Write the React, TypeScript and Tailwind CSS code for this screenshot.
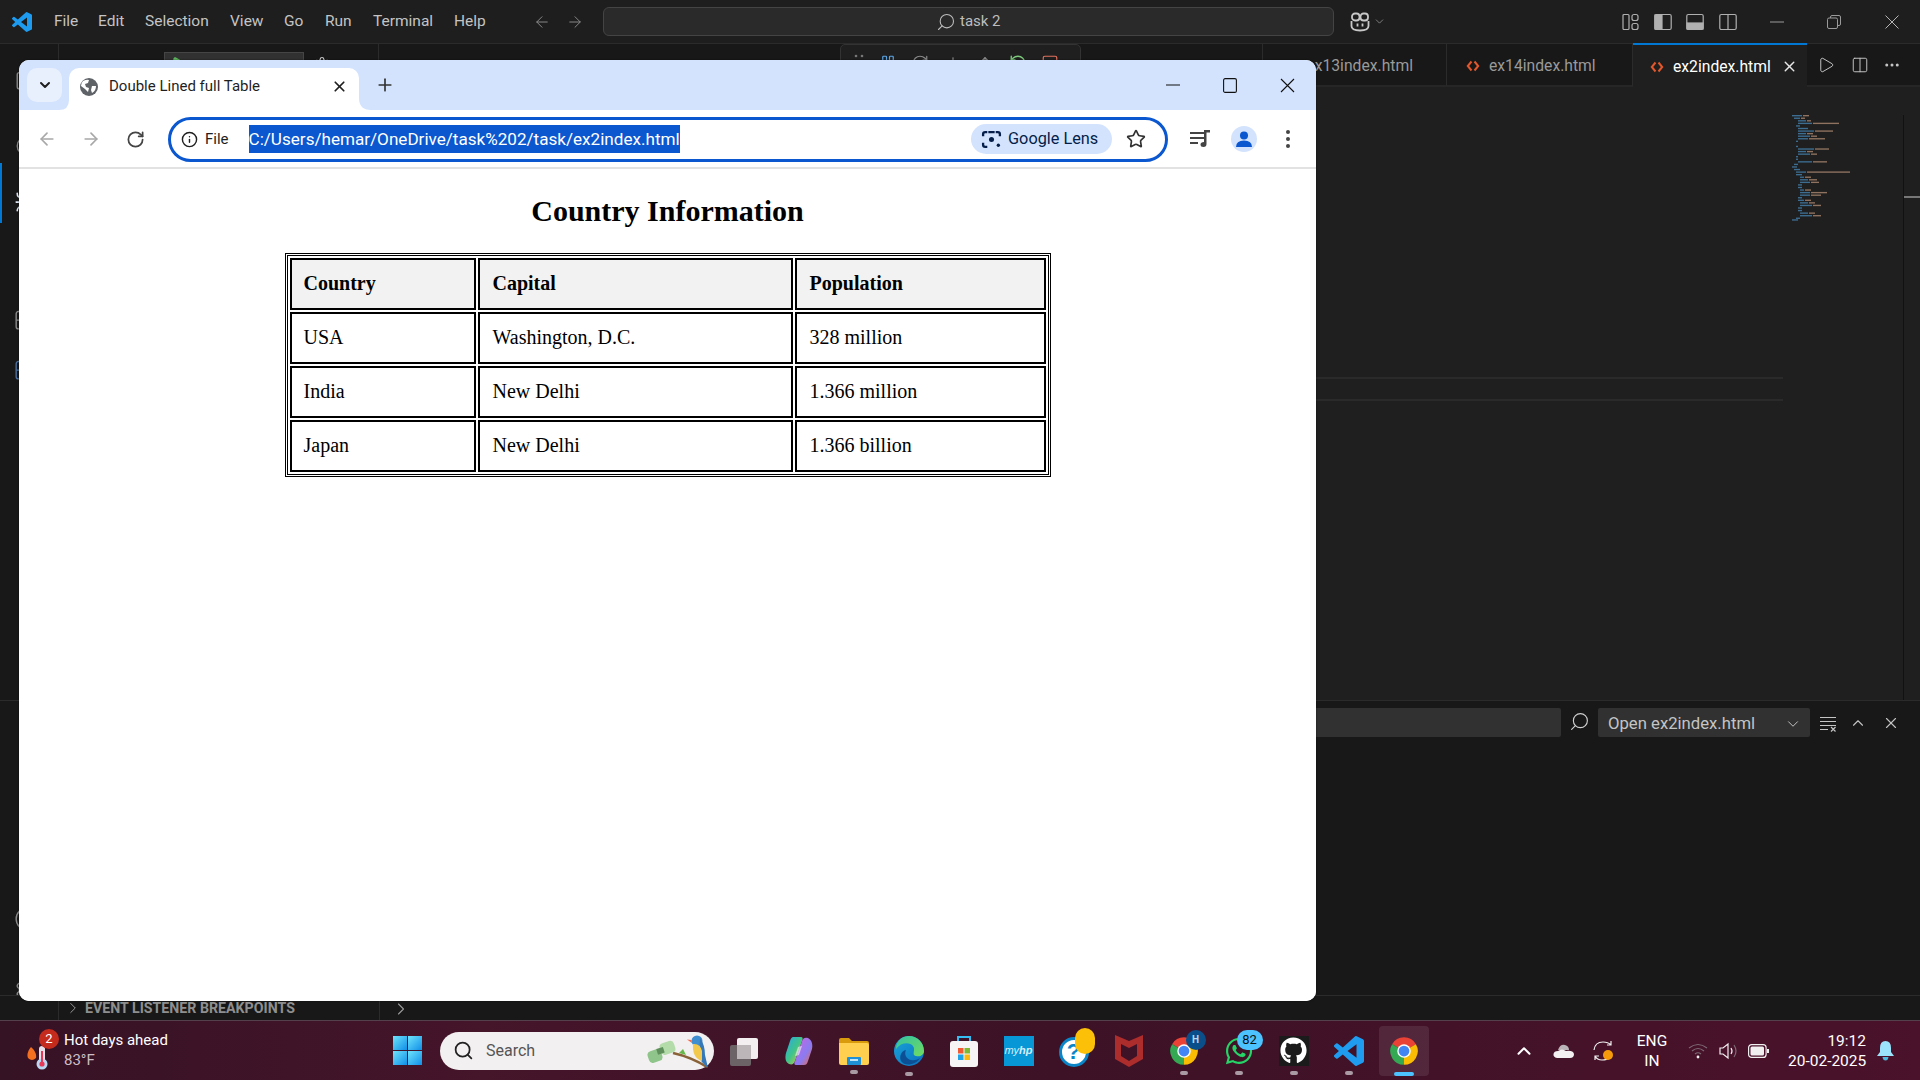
import { ArrowLeft, ArrowRight, RotateCw, Info, Star, X, Plus, ChevronDown, ChevronRight, ChevronUp, Search, Play, Columns2, MoreHorizontal, Files, Bug, Blocks, CircleUserRound, Settings, Pause, RotateCcw, ArrowDown, ArrowUp, Square } from 'lucide-react'
import { FaGithub, FaWhatsapp } from 'react-icons/fa'

const sans = "[font-family:Roboto,'Liberation_Sans',sans-serif]"

function VsCodeLogo({ size = 24, color = '#23a8f2' }: { size?: number; color?: string }) {
  return (
    <svg width={size} height={size} viewBox="0 0 24 24">
      <path fill={color} d="M23.15 2.587L18.21.21a1.494 1.494 0 0 0-1.705.29l-9.46 8.63-4.12-3.128a.999.999 0 0 0-1.276.057L.327 7.261A1 1 0 0 0 .326 8.74L3.899 12 .326 15.26a1 1 0 0 0 .001 1.479L1.65 17.94a.999.999 0 0 0 1.276.057l4.12-3.128 9.46 8.63a1.492 1.492 0 0 0 1.704.29l4.942-2.377A1.5 1.5 0 0 0 24 20.06V3.939a1.5 1.5 0 0 0-.85-1.352zm-5.146 14.861L10.826 12l7.178-5.448v10.896z" />
    </svg>
  )
}

function ChromeLogo({ size = 30 }: { size?: number }) {
  return (
    <svg width={size} height={size} viewBox="0 0 24 24">
      <path fill="#ea4335" d="M12 12 L2.47 6.5 A11 11 0 0 1 21.53 6.5 Z" />
      <path fill="#fbbc04" d="M12 12 L21.53 6.5 A11 11 0 0 1 12 23 Z" />
      <path fill="#34a853" d="M12 12 L12 23 A11 11 0 0 1 2.47 6.5 Z" />
      <circle cx="12" cy="12" r="5.4" fill="#fff" />
      <circle cx="12" cy="12" r="4.3" fill="#4285f4" />
    </svg>
  )
}

function HtmlIcon() {
  return (
    <svg width="14" height="14" viewBox="0 0 14 14" fill="none" stroke="#e2572b" strokeWidth="2">
      <path d="M5.5 2.5 L1.8 7 L5.5 11.5" />
      <path d="M8.5 2.5 L12.2 7 L8.5 11.5" />
    </svg>
  )
}

function Minimap() {
  // rows: y, indent, then blue / orange widths
  const rows = [
    [0, 2, 10, 6], [3, 4, 6, 4], [6, 8, 8, 4], [9, 8, 14, 26], [12, 6, 4, 0], [15, 8, 10, 0], [18, 8, 16, 18],
    [21, 8, 8, 6], [24, 8, 12, 6], [27, 8, 10, 16], [30, 6, 2, 0], [36, 6, 2, 0], [39, 8, 16, 14], [42, 8, 8, 6], [45, 8, 12, 6],
    [48, 6, 2, 0], [51, 6, 2, 0], [54, 8, 14, 14], [57, 4, 4, 0], [60, 2, 5, 0], [63, 4, 6, 0], [66, 6, 10, 46], [69, 6, 6, 0],
    [72, 10, 4, 6], [75, 10, 8, 8], [78, 10, 10, 8], [81, 8, 4, 0], [84, 8, 4, 0], [87, 10, 4, 6], [90, 10, 10, 16], [93, 10, 10, 10],
    [96, 8, 4, 0], [99, 8, 6, 6], [102, 10, 8, 6], [105, 10, 12, 8], [108, 8, 4, 0], [111, 8, 4, 0], [114, 10, 8, 6], [117, 10, 12, 8], [120, 6, 4, 0], [122, 2, 6, 0],
  ]
  return (
    <svg width="60" height="106" viewBox="0 0 60 124" preserveAspectRatio="none">
      {rows.map(([y, x, a, b]) => (
        <g key={y}>
          <rect x={x} y={y} width={a} height="1.6" fill="#3d6d90" />
          {b > 0 && <rect x={x + a + 1} y={y} width={b} height="1.6" fill="#8f7360" />}
        </g>
      ))}
    </svg>
  )
}

function EdgeLogo() {
  return (
    <svg width="32" height="32" viewBox="0 0 32 32">
      <defs>
        <linearGradient id="edgeA" x1="0" y1="0" x2="1" y2="1">
          <stop offset="0" stopColor="#1aa6d8" />
          <stop offset="1" stopColor="#0a6fc0" />
        </linearGradient>
        <linearGradient id="edgeB" x1="0" y1="0" x2="1" y2="1">
          <stop offset="0" stopColor="#35c1a0" />
          <stop offset="1" stopColor="#6fdc62" />
        </linearGradient>
      </defs>
      <circle cx="16" cy="16" r="15" fill="url(#edgeA)" />
      <path fill="url(#edgeB)" d="M14 1.2 C23 0 31 7 31 16 C31 20 27 22 23 21 C18 20 23 15 20 11 C17 7 8 7 3 14 C3 7 8 2 14 1.2 Z" />
      <path fill="#0d4f94" d="M27 23 C23 30 12 32 8 26 C6 22 8 16 13 15 C11 19 13 24 18 25 C21 25.5 24 25 27 23 Z" />
    </svg>
  )
}

function TaskbarIcons() {
  const dot = <span className="absolute bottom-[-9px] left-1/2 -translate-x-1/2 w-[8px] h-[4px] rounded-full bg-[#a99aa3]" />
  return (
    <>
      {/* task view */}
      <div className="w-[55px] flex justify-center">
        <svg width="32" height="32" viewBox="0 0 32 32">
          <rect x="9" y="3" width="21" height="21" rx="2" fill="#f3eef0" />
          <rect x="2" y="10" width="21" height="21" rx="2" fill="#6b6366" />
          <rect x="9" y="10" width="14" height="14" fill="#bdb6b9" />
        </svg>
      </div>
      {/* copilot */}
      <div className="w-[55px] flex justify-center">
        <svg width="30" height="32" viewBox="0 0 30 32">
          <defs>
            <linearGradient id="copA" x1="0" y1="0" x2="1" y2="1">
              <stop offset="0" stopColor="#2aa7e8" />
              <stop offset=".5" stopColor="#3fc48a" />
              <stop offset="1" stopColor="#f2c531" />
            </linearGradient>
            <linearGradient id="copB" x1="0" y1="0" x2="1" y2="1">
              <stop offset="0" stopColor="#d163d8" />
              <stop offset=".6" stopColor="#8a7bf2" />
              <stop offset="1" stopColor="#f3683f" />
            </linearGradient>
          </defs>
          <path fill="url(#copA)" d="M9 2 H17 C19 2 19 4 18 6 L11 26 C10 29 8 30 5 29 C1 27 1 22 2 18 L6 6 C7 3 8 2 9 2 Z" />
          <path fill="url(#copB)" d="M20 30 H12 C10 30 10 28 11 26 L18 6 C19 3 21 2 24 3 C28 5 29 10 28 14 L24 26 C23 29 22 30 20 30 Z" />
          <path fill="#fff" opacity=".55" d="M14 12 L18 11 L15 20 L11 21 Z" />
        </svg>
      </div>
      {/* explorer */}
      <div className="w-[55px] flex justify-center">
        <div className="relative">
          <svg width="30" height="28" viewBox="0 0 30 28">
            <path fill="#d99a0c" d="M0 3 Q0 1 2 1 H10 L13 4 H28 Q30 4 30 6 V10 H0 Z" />
            <path fill="#ffd04f" d="M0 6 H28 Q30 6 30 8 V26 Q30 28 28 28 H2 Q0 28 0 26 Z" />
            <rect x="8" y="20" width="14" height="8" rx="1" fill="#1f8fd6" />
            <rect x="11" y="22" width="8" height="2" fill="#bfe4f8" />
          </svg>
          {dot}
        </div>
      </div>
      {/* edge */}
      <div className="w-[55px] flex justify-center">
        <div className="relative flex">
          <EdgeLogo />
          {dot}
        </div>
      </div>
      {/* store */}
      <div className="w-[55px] flex justify-center">
        <svg width="30" height="32" viewBox="0 0 30 32">
          <path d="M9 7 V2 H21 V7" fill="none" stroke="#35bdf2" strokeWidth="2" />
          <rect x="1" y="6" width="28" height="26" rx="3" fill="#f6f4f4" />
          <rect x="9" y="13" width="5.5" height="5.5" fill="#ef5a34" />
          <rect x="15.5" y="13" width="5.5" height="5.5" fill="#7fb933" />
          <rect x="9" y="19.5" width="5.5" height="5.5" fill="#1fa3e8" />
          <rect x="15.5" y="19.5" width="5.5" height="5.5" fill="#fbb910" />
        </svg>
      </div>
      {/* myhp */}
      <div className="w-[55px] flex justify-center">
        <div className="w-[30px] h-[30px] bg-[#0796d6] flex items-center justify-center text-[#d6eefa] text-[11px] italic [font-family:'Liberation_Sans',sans-serif]">
          my<span className="font-bold">hp</span>
        </div>
      </div>
      {/* help */}
      <div className="w-[55px] flex justify-center">
        <div className="relative w-[30px] h-[30px] mt-[2px] rounded-full bg-white border-[3px] border-[#0a86c8] flex items-center justify-center text-[#0a86c8] text-[22px] font-bold [font-family:'Liberation_Sans',sans-serif]">
          ?
          <span className="absolute -top-[12px] -right-[9px] w-[20px] h-[26px] rounded-full bg-[#fdc009]" />
        </div>
      </div>
      {/* mcafee */}
      <div className="w-[55px] flex justify-center">
        <svg width="28" height="32" viewBox="0 0 28 32">
          <path fill="#ad2c2c" d="M0 0 L14 6 L28 0 V24 L14 32 L0 24 Z M6 9 V21 L14 26 L22 21 V9 L14 13 Z" fillRule="evenodd" />
        </svg>
      </div>
      {/* chrome with profile badge */}
      <div className="w-[55px] flex justify-center">
        <div className="relative flex">
          <ChromeLogo />
          <span className="absolute -top-[6px] -right-[7px] w-[20px] h-[20px] rounded-full bg-[#0b4f8a] text-[#bcd8f0] text-[10px] font-bold flex items-center justify-center">H</span>
          {dot}
        </div>
      </div>
      {/* whatsapp */}
      <div className="w-[55px] flex justify-center">
        <div className="relative flex">
          <FaWhatsapp size={30} color="#25d366" />
          <span className="absolute -top-[6px] -right-[9px] w-[26px] h-[20px] rounded-full bg-[#4cc2ff] text-[#111] text-[13px] flex items-center justify-center">82</span>
          {dot}
        </div>
      </div>
      {/* github */}
      <div className="w-[55px] flex justify-center">
        <div className="relative w-[30px] h-[30px] bg-[#1b1b1b] flex items-center justify-center">
          <FaGithub size={27} color="#fff" />
          {dot}
        </div>
      </div>
      {/* vscode */}
      <div className="w-[55px] flex justify-center">
        <div className="relative flex">
          <VsCodeLogo size={30} color="#1f9cf0" />
          {dot}
        </div>
      </div>
      {/* chrome active */}
      <div className="w-[55px] flex justify-center">
        <div className="relative flex w-[50px] h-[50px] items-center justify-center rounded-[4px] bg-[#5a3044]/70">
          <ChromeLogo />
          <span className="absolute bottom-[0px] left-1/2 -translate-x-1/2 w-[20px] h-[4px] rounded-full bg-[#4cc2ff]" />
        </div>
      </div>
    </>
  )
}

function Browser() {
  const rows = [
    ['USA', 'Washington, D.C.', '328 million'],
    ['India', 'New Delhi', '1.366 million'],
    ['Japan', 'New Delhi', '1.366 billion'],
  ]
  return (
    <div className={`absolute left-[19px] top-[60px] w-[1297px] h-[941px] rounded-[10px] overflow-hidden bg-white flex flex-col shadow-[0_0_2px_rgba(0,0,0,0.6)] ${sans}`}>
      {/* title strip */}
      <div className="h-[50px] bg-[#d3e3fd] flex items-start shrink-0">
        <div className="ml-[8px] mt-[8px] w-[35px] h-[34px] rounded-[10px] bg-[#e9f0fd] flex items-center justify-center">
          <ChevronDown size={16} strokeWidth={3} color="#1f1f1f" />
        </div>
        <div className="relative ml-[7px] mt-[8px] w-[290px] h-[42px] bg-white rounded-t-[10px] flex items-center pl-[10px] pb-[5px] z-10">
          <svg className="absolute -left-[10px] bottom-0" width="10" height="10" viewBox="0 0 10 10"><path fill="#fff" d="M10 0 V10 H0 Q10 10 10 0 Z" /></svg>
          <svg className="absolute -right-[12px] bottom-0" width="12" height="12" viewBox="0 0 12 12"><path fill="#fff" d="M0 0 V12 H12 Q0 12 0 0 Z" /></svg>
          <svg width="20" height="20" viewBox="0 0 20 20">
            <circle cx="10" cy="10" r="9" fill="#5f6368" />
            <path fill="#fff" d="M4 4 Q8 2 10 3 L9 6 L6 7 L7 10 L10 11 L9 15 L6 12 L2 9 Q2 6 4 4 Z M13 9 L17 9 Q17 14 13 16 L12 13 Z" />
          </svg>
          <span className="ml-[10px] text-[15px] text-[#1f1f1f] w-[222px]">Double Lined full Table</span>
          <X size={17} strokeWidth={2.4} color="#1f1f1f" />
        </div>
        <div className="ml-[12px] mt-[11px] w-[28px] h-[28px] flex items-center justify-center">
          <Plus size={20} strokeWidth={2} color="#333" />
        </div>
        <div className="ml-auto h-[50px] flex items-center">
          <svg width="14" height="14" viewBox="0 0 14 14"><path d="M0 7 H14" stroke="#111" strokeWidth="1.2" /></svg>
          <svg className="ml-[43px]" width="14" height="15" viewBox="0 0 14 15" fill="none"><rect x=".6" y=".6" width="12.8" height="13.8" rx="1.5" stroke="#111" strokeWidth="1.1" /></svg>
          <svg className="ml-[43px] mr-[21px]" width="15" height="15" viewBox="0 0 15 15"><path d="M1 1 L14 14 M14 1 L1 14" stroke="#111" strokeWidth="1.1" /></svg>
        </div>
      </div>
      {/* toolbar */}
      <div className="h-[59px] shrink-0 bg-white rounded-t-[10px] border-b-2 border-[#e2e2e2] flex items-center pt-[1px]">
        <ArrowLeft className="ml-[18px]" size={20} color="#a8a8a8" strokeWidth={2} />
        <ArrowRight className="ml-[24px]" size={20} color="#a8a8a8" strokeWidth={2} />
        <RotateCw className="ml-[25px]" size={19} color="#444" strokeWidth={2.2} />
        <div className="ml-[23px] w-[1000px] h-[45px] rounded-full border-[3px] border-[#0b57d0] flex items-center pl-[10px]">
          <Info size={17} color="#1f1f1f" strokeWidth={2} />
          <span className="ml-[7px] text-[15px] text-[#1f1f1f]">File</span>
          <span className="ml-[20px] h-[28px] leading-[28px] bg-[#0b57d0] text-white text-[17.1px] whitespace-nowrap">C:/Users/hemar/OneDrive/task%202/task/ex2index.html</span>
          <div className="ml-auto w-[141px] h-[30px] rounded-full bg-[#d3e3fd] flex items-center pl-[10px] text-[#041e49]">
            <svg width="21" height="21" viewBox="0 0 20 20" fill="none" stroke="#041e49" strokeWidth="2.2">
              <path d="M6 3 H4 Q2 3 2 5 V7 M14 3 H16 Q18 3 18 5 V7 M2 13 V15 Q2 17 4 17 H6" />
              <path d="M7 3 H13" />
              <circle cx="10" cy="10" r="2.4" fill="#041e49" stroke="none" />
              <circle cx="16.5" cy="15.5" r="1.6" fill="#041e49" stroke="none" />
            </svg>
            <span className="ml-[6px] text-[16.3px] whitespace-nowrap">Google Lens</span>
          </div>
          <Star className="ml-[14px] mr-[19px]" size={20} color="#333" strokeWidth={2} />
        </div>
        <svg className="ml-[22px]" width="20" height="18" viewBox="0 0 20 18" fill="#444">
          <rect x="0" y="2" width="14" height="2" />
          <rect x="0" y="7" width="14" height="2" />
          <rect x="0" y="12" width="8" height="2" />
          <path d="M14 0 H20 V2.5 H16.5 V14 Q16.5 17 13.5 17 Q10.5 17 10.5 14.5 Q10.5 12 14 12 Z" />
        </svg>
        <div className="ml-[21px] w-[26px] h-[26px] rounded-full bg-[#d3e3fd] flex items-center justify-center">
          <svg width="18" height="18" viewBox="0 0 18 18"><circle cx="9" cy="5.5" r="4" fill="#0b57d0" /><path fill="#0b57d0" d="M1 17 Q1 10.5 9 10.5 Q17 10.5 17 17 Z" /></svg>
        </div>
        <svg className="ml-[29px]" width="4" height="18" viewBox="0 0 4 18" fill="#444"><circle cx="2" cy="2" r="2" /><circle cx="2" cy="9" r="2" /><circle cx="2" cy="16" r="2" /></svg>
      </div>
      {/* page */}
      <div className="flex-1 bg-white text-black [font-family:'Liberation_Serif','Times_New_Roman',serif]">
        <h2 className="mt-[24px] text-center text-[30px] leading-[36px] font-bold">Country Information</h2>
        <table className="mt-[24px] mx-auto w-[766px] table-fixed border-separate border-spacing-[2.5px] border-[3px] border-double border-black text-[20px]">
          <thead>
            <tr className="h-[52px]">
              <th className="w-[186px] border-2 border-black bg-[#f2f2f2] pl-[12px] pb-[2px] text-left font-bold">Country</th>
              <th className="w-[315px] border-2 border-black bg-[#f2f2f2] pl-[13px] pb-[2px] text-left font-bold">Capital</th>
              <th className="border-2 border-black bg-[#f2f2f2] pl-[13px] pb-[2px] text-left font-bold">Population</th>
            </tr>
          </thead>
          <tbody>
            {rows.map(r => (
              <tr key={r[0]} className="h-[52px]">
                <td className="border-2 border-black pl-[12px] pb-[2px]">{r[0]}</td>
                <td className="border-2 border-black pl-[13px] pb-[2px]">{r[1]}</td>
                <td className="border-2 border-black pl-[13px] pb-[2px]">{r[2]}</td>
              </tr>
            ))}
          </tbody>
        </table>
      </div>
    </div>
  )
}

export default function App() {
  return (
    <div className={`relative w-[1920px] h-[1080px] overflow-hidden flex flex-col bg-[#1f1f1f] ${sans}`}>
      {/* vs code title bar */}
      <div className="h-[43px] shrink-0 bg-[#1e1e1e] flex items-center text-[#cccccc] text-[15.5px] relative">
        <div className="ml-[12px]"><VsCodeLogo size={20} color="#1d9bf0" /></div>
        <div className="ml-[22px] flex items-center text-[#c4c4c4]">
          <span className="w-[44px]">File</span>
          <span className="w-[47px]">Edit</span>
          <span className="w-[85px]">Selection</span>
          <span className="w-[54px]">View</span>
          <span className="w-[41px]">Go</span>
          <span className="w-[48px]">Run</span>
          <span className="w-[81px]">Terminal</span>
          <span>Help</span>
        </div>
        <ArrowLeft className="ml-[47px]" size={18} color="#8a8a8a" strokeWidth={1.3} />
        <ArrowRight className="ml-[15px]" size={18} color="#8a8a8a" strokeWidth={1.3} />
        <div className="ml-[19px] w-[731px] h-[29px] rounded-[6px] border border-[#444] bg-[#2a2a2a] flex items-center justify-center text-[15px] text-[#bdbdbd]">
          <Search className="-scale-x-100 mr-[4px]" size={20} color="#bdbdbd" strokeWidth={1.3} />
          task 2
        </div>
        <svg className="ml-[16px]" width="20" height="20" viewBox="0 0 20 20" fill="none" stroke="#c8c8c8" strokeWidth="1.8">
          <rect x="2" y="1.5" width="7.5" height="7" rx="3" />
          <rect x="10.5" y="1.5" width="7.5" height="7" rx="3" />
          <path d="M1.5 9 V14 Q1.5 18.5 10 18.5 Q18.5 18.5 18.5 14 V9" />
          <path d="M7.5 11.5 V14.5 M12.5 11.5 V14.5" />
        </svg>
        <ChevronDown size={13} color="#9a9a9a" strokeWidth={1.4} className="ml-[3px]" />
        <div className="ml-auto flex items-center">
          <svg width="18" height="18" viewBox="0 0 18 18" fill="none" stroke="#b0b0b0" strokeWidth="1.2">
            <rect x="1" y="1.5" width="6" height="15" rx="1" /><rect x="10" y="1.5" width="6" height="6" rx="2" /><rect x="10" y="10.5" width="6" height="6" rx="2" />
          </svg>
          <svg className="ml-[14px]" width="18" height="18" viewBox="0 0 18 18" fill="none" stroke="#b0b0b0" strokeWidth="1.2">
            <rect x=".8" y="1.5" width="16.4" height="15" rx="1.5" /><rect x="1" y="2" width="7" height="14" fill="#b0b0b0" />
          </svg>
          <svg className="ml-[14px]" width="18" height="18" viewBox="0 0 18 18" fill="none" stroke="#b0b0b0" strokeWidth="1.2">
            <rect x=".8" y="1.5" width="16.4" height="15" rx="1.5" /><rect x="1" y="10" width="16" height="6" fill="#b0b0b0" />
          </svg>
          <svg className="ml-[15px]" width="18" height="18" viewBox="0 0 18 18" fill="none" stroke="#b0b0b0" strokeWidth="1.2">
            <rect x=".8" y="1.5" width="16.4" height="15" rx="1.5" /><path d="M9 2 V16" />
          </svg>
          <svg className="ml-[33px]" width="14" height="14" viewBox="0 0 14 14"><path d="M0 7 H14" stroke="#9a9a9a" strokeWidth="1" /></svg>
          <svg className="ml-[43px]" width="14" height="14" viewBox="0 0 14 14" fill="none" stroke="#9a9a9a"><rect x=".5" y="3" width="10" height="10.5" rx="1.5" /><path d="M3.5 3 V2 Q3.5 .5 5 .5 H12 Q13.5 .5 13.5 2 V9 Q13.5 10.5 12 10.5 H10.5" /></svg>
          <svg className="ml-[44px] mr-[21px]" width="14" height="14" viewBox="0 0 14 14"><path d="M.5 .5 L13.5 13.5 M13.5 .5 L.5 13.5" stroke="#b5b5b5" strokeWidth="1" /></svg>
        </div>
      </div>

      {/* editor tabs */}
      <div className="h-[44px] shrink-0 bg-[#181818] border-t border-[#2b2b2b] flex text-[15.7px] text-[#9a9a9a]">
        <div className="w-[59px] border-r border-[#2b2b2b]" />
        <div className="w-[320px] border-r border-[#2b2b2b]" />
        <div className="w-[884px] border-r border-[#2b2b2b]" />
        <div className="w-[184px] border-r border-[#2b2b2b] border-b-2 border-b-[#262626] flex items-center justify-end pr-[33px] pt-[3px]">x13index.html</div>
        <div className="w-[186px] border-r border-[#2b2b2b] border-b-2 border-b-[#262626] flex items-center pl-[19px] pt-[3px]">
          <HtmlIcon />
          <span className="ml-[9px]">ex14index.html</span>
        </div>
        <div className="w-[174px] -mt-px border-t-2 border-[#0078d4] bg-[#1f1f1f] flex items-center pl-[17px] pt-[1px] text-white">
          <HtmlIcon />
          <span className="ml-[9px]">ex2index.html</span>
          <X className="ml-[10px]" size={17} color="#e6e6e6" strokeWidth={2} />
        </div>
        <div className="flex-1 flex items-center border-b-2 border-b-[#262626] pt-[1px]">
          <Play className="ml-[10px]" size={18} color="#c4c4c4" strokeWidth={1.3} />
          <Columns2 className="ml-[16px]" size={18} color="#c4c4c4" strokeWidth={1.3} />
          <MoreHorizontal className="ml-[14px]" size={18} color="#c4c4c4" strokeWidth={2} />
        </div>
      </div>

      {/* editor */}
      <div className="h-[613px] shrink-0 flex relative bg-[#1f1f1f]">
        <div className="relative w-[59px] bg-[#181818] border-r border-[#2b2b2b] flex flex-col items-start pl-[14px] text-[#8a8a8a]">
          <span className="absolute left-0 top-[76px] w-[2px] h-[60px] bg-[#0078d4]" />
          <Files className="mt-[-22px]" size={26} strokeWidth={1.3} />
          <Search className="mt-[43px]" size={26} strokeWidth={1.3} />
          <Bug className="mt-[28px]" size={26} color="#dfe7f5" strokeWidth={1.5} />
          <Blocks className="mt-[91px]" size={26} strokeWidth={1.3} />
          <Blocks className="mt-[24px]" size={26} color="#4a6fa0" strokeWidth={1.3} />
        </div>
        <div className="w-[320px] bg-[#181818] border-r border-[#2b2b2b]" />
        <div className="flex-1 flex flex-col">
          <div className="h-[290px] shrink-0" />
          <div className="mr-[137px] border-t-2 border-[#2a2a2a] h-[22px]" />
          <div className="mr-[137px] border-t-2 border-[#2a2a2a]" />
        </div>
        {/* minimap and scrollbar sit over the editor */}
        <div className="absolute left-[1790px] top-[28px]"><Minimap /></div>
        <div className="absolute left-[1903px] top-[28px] bottom-0 w-[17px] border-l border-[#111]">
          <div className="mt-[81px] h-[2px] bg-[#777]" />
        </div>
      </div>

      {/* debug panel */}
      <div className="h-[295px] shrink-0 bg-[#181818] border-t border-[#2b2b2b] flex">
        <div className="w-[59px] border-r border-[#2b2b2b] flex flex-col items-start justify-end pl-[14px] text-[#8a8a8a]">
          <CircleUserRound className="mb-[45px]" size={26} strokeWidth={1.3} />
          <Settings className="mb-[-8px]" size={26} strokeWidth={1.3} />
        </div>
        <div className="flex-1 pt-[7px] flex items-start justify-end pr-[20px] text-[#cccccc]">
          <div className="w-[1000px] h-[29px] bg-[#313131] rounded-[2px]" />
          <Search className="-scale-x-100 ml-[8px] mt-[3px]" size={21} color="#d0d0d0" strokeWidth={1.3} />
          <div className="ml-[8px] w-[212px] h-[29px] rounded-[2px] bg-[#313131] flex items-center pl-[10px] pt-[3px] text-[16.7px] text-[#c4c4c4] whitespace-nowrap">
            Open ex2index.html
            <ChevronDown className="ml-auto mr-[8px]" size={18} color="#c4c4c4" strokeWidth={1.3} />
          </div>
          <svg className="ml-[9px] mt-[8px]" width="18" height="16" viewBox="0 0 18 16" fill="none" stroke="#c4c4c4" strokeWidth="1.2">
            <path d="M1 1.5 H17 M1 5.5 H17 M1 9.5 H17 M1 13.5 H9" />
            <path d="M12 11 L16.5 15.5 M16.5 11 L12 15.5" />
          </svg>
          <ChevronUp className="ml-[12px] mt-[6px]" size={18} color="#c4c4c4" strokeWidth={1.5} />
          <X className="ml-[15px] mt-[6px]" size={18} color="#c4c4c4" strokeWidth={1.5} />
        </div>
      </div>

      {/* bottom strip */}
      <div className="h-[25px] shrink-0 bg-[#181818] border-t border-[#2b2b2b] flex">
        <div className="w-[59px] border-r border-[#2b2b2b]" />
        <div className="w-[321px] border-r border-[#2b2b2b] flex items-end pb-[4px] pl-[5px] text-[14.2px] leading-[16px] font-bold text-[#8f8f8f]">
          <ChevronRight className="mb-[-1px]" size={18} color="#9a9a9a" strokeWidth={1.3} />
          <span className="ml-[3px] whitespace-nowrap">EVENT LISTENER BREAKPOINTS</span>
        </div>
        <div className="flex items-end pb-[1px] pl-[11px]">
          <ChevronRight size={20} color="#9a9a9a" strokeWidth={1.3} />
        </div>
      </div>

      {/* windows taskbar */}
      <div className="h-[60px] shrink-0 border-t border-[#54404c] bg-[linear-gradient(90deg,#361225_0%,#45152a_25%,#3d1226_55%,#4a122b_100%)] flex items-center text-white">
        <div className="relative ml-[27px] w-[25px] h-[40px]">
          <svg className="absolute left-0 top-[8px]" width="25" height="32" viewBox="0 0 25 32">
            <path fill="#f37021" d="M4 8 Q10 13 9 19 Q5 23 1 19 Q-1 14 4 8 Z" />
            <rect x="12" y="7" width="6" height="20" rx="3" fill="#e8e0e8" />
            <circle cx="15" cy="25" r="5.5" fill="#b9d6f2" />
            <circle cx="15" cy="25" r="2.6" fill="#e53957" />
            <rect x="14" y="12" width="2" height="12" fill="#e53957" />
          </svg>
          <span className="absolute -top-[2px] left-[12px] w-[20px] h-[20px] rounded-full bg-[#c42b1c] text-[13px] flex items-center justify-center">2</span>
        </div>
        <div className="ml-[12px] w-[115px] -mt-[2px] flex flex-col text-[15px] leading-[20px]">
          <span className="whitespace-nowrap">Hot days ahead</span>
          <span className="text-[#cdbdc6]">83°F</span>
        </div>
        <div className="ml-[201px] w-[55px] flex justify-center">
          <svg width="29" height="29" viewBox="0 0 29 29">
            <defs>
              <linearGradient id="win" x1="0" y1="0" x2="1" y2="1">
                <stop offset="0" stopColor="#6fe3fb" />
                <stop offset="1" stopColor="#0f8fe8" />
              </linearGradient>
            </defs>
            <rect x="0" y="0" width="14" height="14" fill="url(#win)" />
            <rect x="15" y="0" width="14" height="14" fill="url(#win)" />
            <rect x="0" y="15" width="14" height="14" fill="url(#win)" />
            <rect x="15" y="15" width="14" height="14" fill="url(#win)" />
          </svg>
        </div>
        <div className="ml-[5px] w-[274px] h-[38px] rounded-full bg-[#f3f0f1] flex items-center pl-[13px] text-[#555] text-[16px]">
          <Search size={21} color="#222" strokeWidth={2} />
          <span className="ml-[12px]">Search</span>
          <svg className="ml-auto mr-[1px]" width="66" height="36" viewBox="0 0 66 36">
            <path d="M26 20 Q44 24 60 34" fill="none" stroke="#8a6238" strokeWidth="2.4" />
            <path d="M32 20 L36 16 L39 22 Z" fill="#67b84a" />
            <rect x="1" y="17" width="14" height="12" rx="4" fill="#8fc48a" transform="rotate(-18 8 23)" />
            <rect x="13" y="9" width="15" height="12" rx="4" fill="#b4dcab" transform="rotate(-18 20 15)" />
            <rect x="10" y="15" width="7" height="6" fill="#5f8f5a" transform="rotate(-18 13 18)" />
            <circle cx="50" cy="8" r="5.5" fill="#3f8fd0" />
            <path fill="#f2684a" d="M44.5 7 L40 6.5 L45 10 Z" />
            <path fill="#3478b8" d="M53 5 Q58 12 58 22 L61 35 Q53 28 52 24 Z" />
            <path fill="#f2c94c" d="M46 11 Q53 10 55 18 L55 28 Q45 25 46 11 Z" />
          </svg>
        </div>
        <div className="ml-[2px] flex items-center"><TaskbarIcons /></div>
        {/* tray */}
        <div className="ml-auto flex items-center text-[15.5px]">
          <ChevronUp size={22} color="#fff" strokeWidth={2.2} />
          <svg className="ml-[18px]" width="21" height="14" viewBox="0 0 21 14">
            <path fill="#b9b2b6" d="M5 6 Q7 0 12 1 Q16 2 16 6 Z" />
            <path fill="#f4f0f2" d="M4 14 Q0 13 0.5 10 Q1 7 5 7 Q9 4 13 7 Q20 6 21 10 Q21 14 17 14 Z" />
          </svg>
          <svg className="ml-[18px]" width="22" height="22" viewBox="0 0 22 22" fill="none" stroke="#f0f0f0" strokeWidth="1.2">
            <path d="M2 10 Q3 2 11 2 Q16 2 19 5 M19 1 V5 H15" />
            <path d="M18 17 Q15 20 10 20 Q5 20 3 16 M3 20 V16 H7" />
            <circle cx="16" cy="15" r="5" fill="#f59b0b" stroke="none" />
          </svg>
          <div className="ml-[13px] w-[50px] text-center leading-[20px]">ENG<br />IN</div>
          <svg className="ml-[11px]" width="20" height="16" viewBox="0 0 20 16" fill="none" stroke="#7d6a74" strokeWidth="1.2">
            <path d="M1 5 Q10 -2 19 5 M4 8 Q10 3 16 8 M7 11 Q10 8.5 13 11" />
            <circle cx="10" cy="14" r="1.4" fill="#f0f0f0" stroke="none" />
          </svg>
          <svg className="ml-[11px]" width="20" height="18" viewBox="0 0 20 18" fill="none" stroke="#f0f0f0" strokeWidth="1.2">
            <path d="M1 6 H4 L9 2 V16 L4 12 H1 Z" />
            <path d="M12 6 Q14 9 12 12" />
            <path d="M15 3 Q19 9 15 15" stroke="#7d6a74" />
          </svg>
          <svg className="ml-[9px]" width="21" height="14" viewBox="0 0 21 14" fill="none" stroke="#f0f0f0" strokeWidth="1.2">
            <rect x=".6" y=".6" width="17.5" height="12.8" rx="3" />
            <rect x="2.5" y="2.5" width="13.5" height="9" rx="1.5" fill="#f0f0f0" stroke="none" />
            <rect x="19" y="5" width="2" height="4" fill="#f0f0f0" stroke="none" />
          </svg>
          <div className="ml-[19px] w-[78px] text-right leading-[20px] whitespace-nowrap">19:12<br />20-02-2025</div>
          <svg className="ml-[11px] mr-[26px]" width="17" height="20" viewBox="0 0 17 20">
            <path fill="#9ce4fb" d="M8.5 0 Q14 0 14 7 V11 L17 15 H0 L3 11 V7 Q3 0 8.5 0 Z" />
            <path fill="#4cb9dd" d="M5.5 16 H11.5 Q11 19.5 8.5 19.5 Q6 19.5 5.5 16 Z" />
          </svg>
        </div>
      </div>

      {/* bits of run and debug toolbars that poke out above the browser */}
      <div className="absolute left-[164px] top-[52px] w-[140px] h-[20px] bg-[#313131] border border-[#454545] flex items-start pl-[6px] pt-[3px]">
        <Play size={14} fill="#5fb85f" color="#5fb85f" />
      </div>
      <Settings className="absolute left-[313px] top-[56px]" size={18} color="#c8c8c8" strokeWidth={1.6} />
      <div className="absolute left-[840px] top-[44px] w-[241px] h-[30px] bg-[#1f1f1f] border border-[#333] rounded-[5px] flex items-start pt-[9px] pl-[13px] gap-[14.5px] text-[#8a8a8a]">
        <svg width="10" height="16" viewBox="0 0 10 16" fill="#777"><circle cx="2" cy="2" r="1.3" /><circle cx="8" cy="2" r="1.3" /><circle cx="2" cy="8" r="1.3" /><circle cx="8" cy="8" r="1.3" /></svg>
        <Pause size={18} color="#5aa5e6" strokeWidth={1.6} />
        <RotateCw size={18} strokeWidth={1.6} />
        <ArrowDown size={18} strokeWidth={1.6} />
        <ArrowUp size={18} strokeWidth={1.6} />
        <RotateCcw size={18} color="#7cc97c" strokeWidth={1.8} />
        <Square size={18} color="#e0715f" strokeWidth={1.6} />
        <ChevronDown size={12} className="-ml-[8px] mt-[4px]" />
      </div>

      <Browser />
    </div>
  )
}
